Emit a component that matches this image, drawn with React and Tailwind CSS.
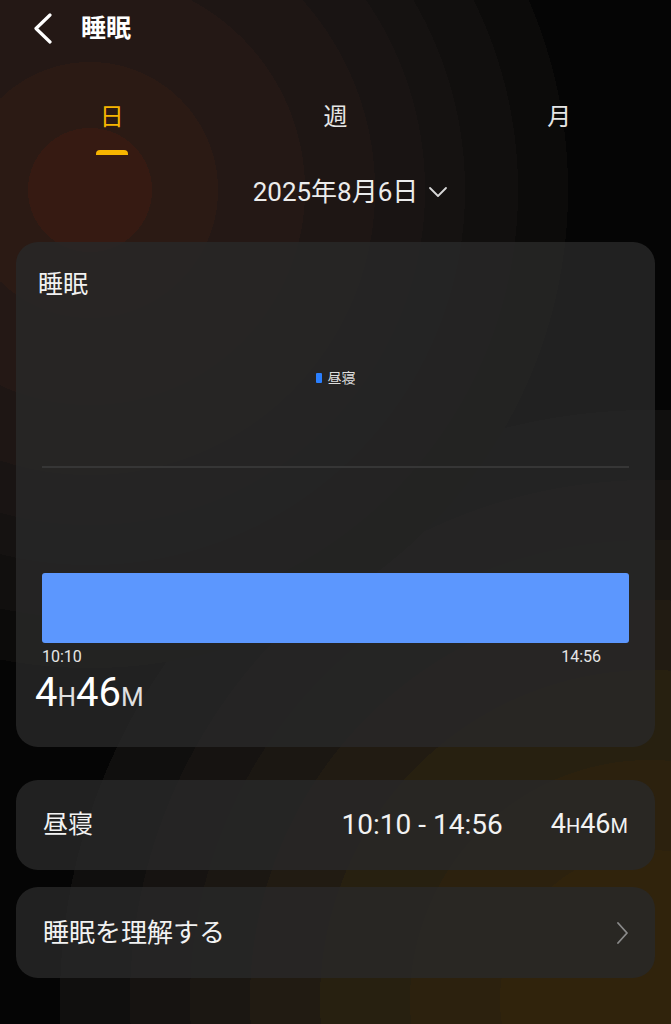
export default function App() {
  return (
    <div className="min-h-screen w-full overflow-hidden bg-[#050505] bg-[image:radial-gradient(circle_at_90px_190px,#361a12_0_62px,#2b1a14_62px_128px,#241815_128px_215px,#1e1614_215px_285px,#191413_285px_335px,#151211_335px_375px,#110f0e_375px_428px,#0c0b0a_428px_478px,transparent_478px),radial-gradient(circle_at_650px_1000px,#30230c_0_150px,#2c210e_150px_240px,#272010_240px_330px,#211b12_330px_400px,#1b1712_400px_460px,#161311_460px_520px,#100f0e_520px_590px,transparent_590px)] font-['Roboto','Noto_Sans_CJK_JP',sans-serif] text-[#f2f2f2]">
      {/* Header */}
      <div className="flex h-[58px] items-center">
        <svg className="ml-[31px] h-[32px] w-[22px]" viewBox="0 0 22 32" fill="none">
          <path d="M19 2 L5 15.5 L19 29" stroke="#ffffff" strokeWidth="3.2" strokeLinecap="round" strokeLinejoin="round" />
        </svg>
        <span className="ml-[28px] text-[25px] font-bold leading-[32px] text-white">睡眠</span>
      </div>

      {/* Tabs */}
      <div className="mt-[43px] grid grid-cols-3">
        <div className="flex flex-col items-center">
          <span className="text-[24px] leading-[32px] text-[#f7b500]">日</span>
          <div className="mt-[17px] h-[5px] w-[32px] rounded-t-[4px] bg-[#f7b500]" />
        </div>
        <div className="flex flex-col items-center">
          <span className="text-[24px] leading-[32px] text-[#e6e6e6]">週</span>
        </div>
        <div className="flex flex-col items-center">
          <span className="text-[24px] leading-[32px] text-[#e6e6e6]">月</span>
        </div>
      </div>

      {/* Date */}
      <div className="mt-[21px] flex items-center justify-center pl-[30px]">
        <span className="text-[26px] leading-[32px] text-[#ececec]">2025年8月6日</span>
        <svg className="ml-[10px] h-[12px] w-[20px]" viewBox="0 0 20 12" fill="none">
          <path d="M2 2 L10 10 L18 2" stroke="#d8d8d8" strokeWidth="1.8" strokeLinecap="round" strokeLinejoin="round" />
        </svg>
      </div>

      {/* Main card */}
      <div className="mx-[16px] mt-[34px] flex h-[505px] flex-col rounded-[22px] bg-[rgba(40,40,40,0.82)]">
        <div className="pl-[22px] pt-[27px] text-[25px] leading-[32px] text-[#f2f2f2]">睡眠</div>
        <div className="mt-[67px] flex h-[20px] items-center justify-center">
          <div className="h-[10px] w-[6px] rounded-[1px] bg-[#2a7fff]" />
          <span className="ml-[6px] text-[14px] leading-[20px] text-[#dcdcdc]">昼寝</span>
        </div>
        <div className="mx-[26px] mt-[78px] h-[2px] bg-[#363636]" />
        <div className="mx-[26px] mt-[105px] h-[70px] rounded-[3px] bg-[#5c97fe]" />
        <div className="mx-[26px] mt-[4px] flex justify-between pr-[28px] text-[16px] leading-[20px] text-[#e6e6e6]">
          <span>10:10</span>
          <span>14:56</span>
        </div>
        <div className="mt-[2px] flex items-baseline pl-[19px] leading-[48px] text-white">
          <span className="text-[40px]">4</span>
          <span className="text-[26px] text-[#e0e0e0]">H</span>
          <span className="text-[40px]">46</span>
          <span className="text-[26px] text-[#e0e0e0]">M</span>
        </div>
      </div>

      {/* Nap card */}
      <div className="mx-[16px] mt-[33px] flex h-[90px] items-center rounded-[22px] bg-[rgba(40,40,40,0.82)] px-[27px]">
        <span className="text-[25px] leading-[32px]">昼寝</span>
        <span className="ml-auto text-[28px] leading-[32px]">10:10 - 14:56</span>
        <span className="ml-[48px] flex items-baseline leading-[32px]">
          <span className="text-[27px]">4</span>
          <span className="text-[20px]">H</span>
          <span className="text-[27px]">46</span>
          <span className="text-[20px]">M</span>
        </span>
      </div>

      {/* Understand sleep card */}
      <div className="mx-[16px] mt-[17px] flex h-[91px] items-center rounded-[22px] bg-[rgba(40,40,40,0.82)] px-[27px]">
        <span className="text-[26px] leading-[32px]">睡眠を理解する</span>
        <svg className="ml-auto h-[24px] w-[12px]" viewBox="0 0 12 24" fill="none">
          <path d="M2 2 L11 12 L2 22" stroke="#8a8a8a" strokeWidth="1.8" strokeLinecap="round" strokeLinejoin="round" />
        </svg>
      </div>
      <div className="h-[46px]" />
    </div>
  );
}
